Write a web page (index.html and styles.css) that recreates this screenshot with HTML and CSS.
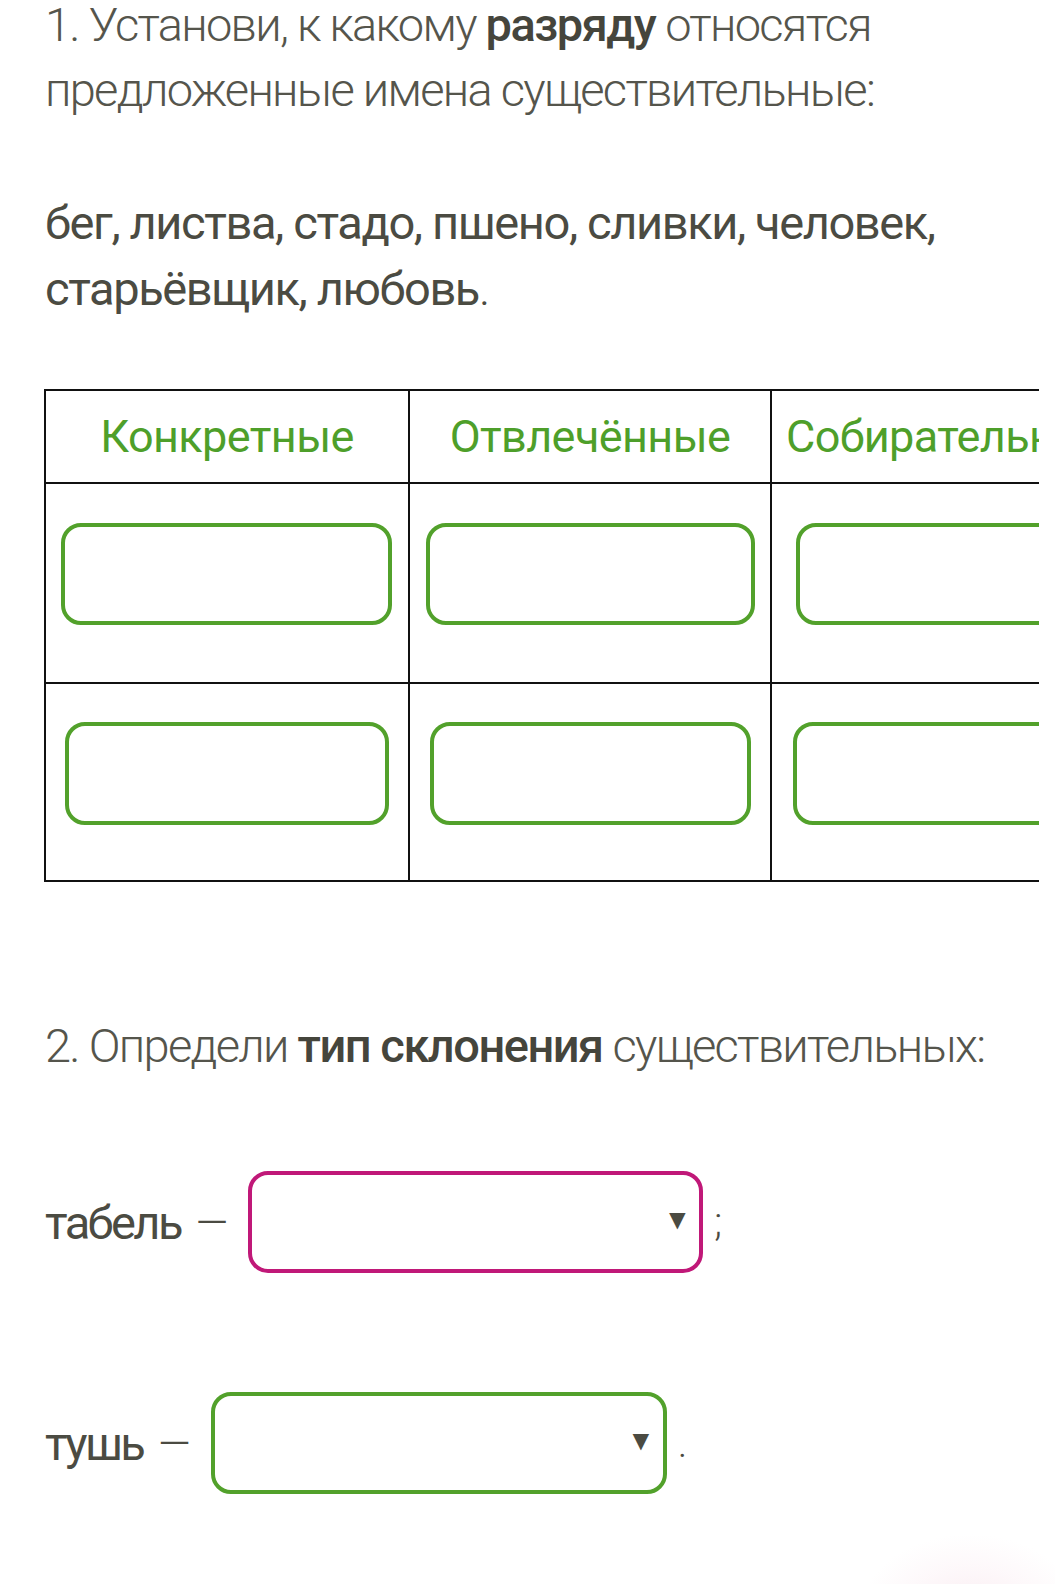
FILE: index.html
```html
<!DOCTYPE html>
<html lang="ru">
<head>
<meta charset="utf-8">
<title>Задание</title>
<link rel="stylesheet" href="styles.css">
</head>
<body>
<div class="page">
  <p class="task">1. Установи, к какому <b>разряду</b> относятся предложенные имена существительные:</p>
  <p class="words">бег, листва, стадо, пшено, сливки, человек, старьёвщик, любовь<span class="light">.</span></p>

  <div class="table-wrap">
    <table class="grid">
      <tr class="head">
        <th class="c1">Конкретные</th>
        <th class="c2">Отвлечённые</th>
        <th class="c3">Собирательные</th>
      </tr>
      <tr class="row r1">
        <td><div class="drop d11"></div></td>
        <td><div class="drop d12"></div></td>
        <td><div class="drop d13"></div></td>
      </tr>
      <tr class="row r2">
        <td><div class="drop d21"></div></td>
        <td><div class="drop d22"></div></td>
        <td><div class="drop d23"></div></td>
      </tr>
    </table>
  </div>

  <p class="task task2">2. Определи <b>тип склонения</b> существительных:</p>

  <div class="line line1">
    <span class="word">табель</span><span class="dash">—</span>
    <div class="select pink"><span class="arrow">▼</span></div><span class="punct">;</span>
  </div>
  <div class="line line2">
    <span class="word">тушь</span><span class="dash">—</span>
    <div class="select green"><span class="arrow">▼</span></div><span class="punct">.</span>
  </div>
</div>
<div class="fab-glow"></div>
</body>
</html>
```

FILE: styles.css
```css
html {
  overflow: hidden;
}
html, body {
  margin: 0;
  padding: 0;
  background: #ffffff;
}
body {
  width: 1055px;
  height: 1584px;
  overflow: hidden;
  position: relative;
  font-family: Roboto, "Noto Sans", sans-serif;
  color: #4b4b42;
}
.page {
  padding: 0 17px 0 45px;
}
.task {
  margin: -8px 0 0 0;
  font-size: 47px;
  line-height: 65px;
  font-weight: 300;
  color: #55554c;
  letter-spacing: -1.7px;
}
.task b {
  font-weight: 500;
  color: #45453c;
  letter-spacing: -1.5px;
}
.words {
  margin: 68px 0 0 0;
  font-size: 47px;
  line-height: 66px;
  font-weight: 400;
  color: #4b4b42;
  letter-spacing: -1.4px;
}
.words .light {
  font-weight: 300;
}
.table-wrap {
  margin-top: 67px;
  margin-left: -1px;
  width: 995px;
  overflow: hidden;
}
.grid {
  border-collapse: collapse;
  table-layout: fixed;
  width: 1100px;
}
.grid th, .grid td {
  border: 2px solid #111;
  padding: 0;
}
.grid th.c1 { width: 362px; }
.grid th.c2 { width: 360px; }
.grid th.c3 { width: 360px; text-align: left; padding-left: 14px; }
.head th {
  height: 91px;
  font-size: 45px;
  font-weight: 400;
  color: #4e9f2a;
  letter-spacing: -0.6px;
  vertical-align: middle;
}
.row td {
  vertical-align: top;
}
.r1 td { height: 198px; }
.r2 td { height: 196px; }
.drop {
  box-sizing: border-box;
  height: 102px;
  border: 4px solid #52a12b;
  border-radius: 20px;
  background: #fff;
}
.r1 .drop { margin-top: 39px; }
.r2 .drop { margin-top: 38px; height: 103px; }
.d11 { margin-left: 15px; width: 331px; }
.d12 { margin-left: 16px; width: 329px; }
.d13 { margin-left: 24px; width: 330px; }
.d21 { margin-left: 19px; width: 324px; }
.d22 { margin-left: 20px; width: 321px; }
.d23 { margin-left: 21px; width: 330px; }

.task2 {
  margin-top: 131px;
}
.line {
  display: flex;
  align-items: center;
  font-size: 47px;
  font-weight: 400;
  color: #4b4b42;
  letter-spacing: -2.6px;
}
.line1 { margin-top: 93px; }
.line2 { margin-top: 119px; }
.dash {
  margin-left: 15px;
  font-weight: 300;
  font-size: 42px;
  letter-spacing: 0;
}
.select {
  box-sizing: border-box;
  height: 102px;
  border-radius: 20px;
  border: 4px solid;
  display: flex;
  align-items: center;
  justify-content: flex-end;
  padding-right: 8px;
}
.line1 .select { margin-left: 20px; width: 455px; }
.line2 .select { margin-left: 20px; width: 456px; }
.pink { border-color: #c01878; }
.green { border-color: #52a12b; }
.arrow {
  font-size: 28px;
  color: #4b4b42;
  margin-top: -6px;
  letter-spacing: 0;
}
.punct {
  margin-left: 11px;
  font-weight: 300;
  font-size: 40px;
}
.fab-glow {
  position: absolute;
  left: 860px;
  bottom: 0;
  width: 195px;
  height: 80px;
  background: radial-gradient(ellipse 110px 80px at 110px 110px, rgba(249,232,238,0.8) 0%, rgba(252,242,246,0.5) 60%, rgba(255,255,255,0) 100%);
}
```
